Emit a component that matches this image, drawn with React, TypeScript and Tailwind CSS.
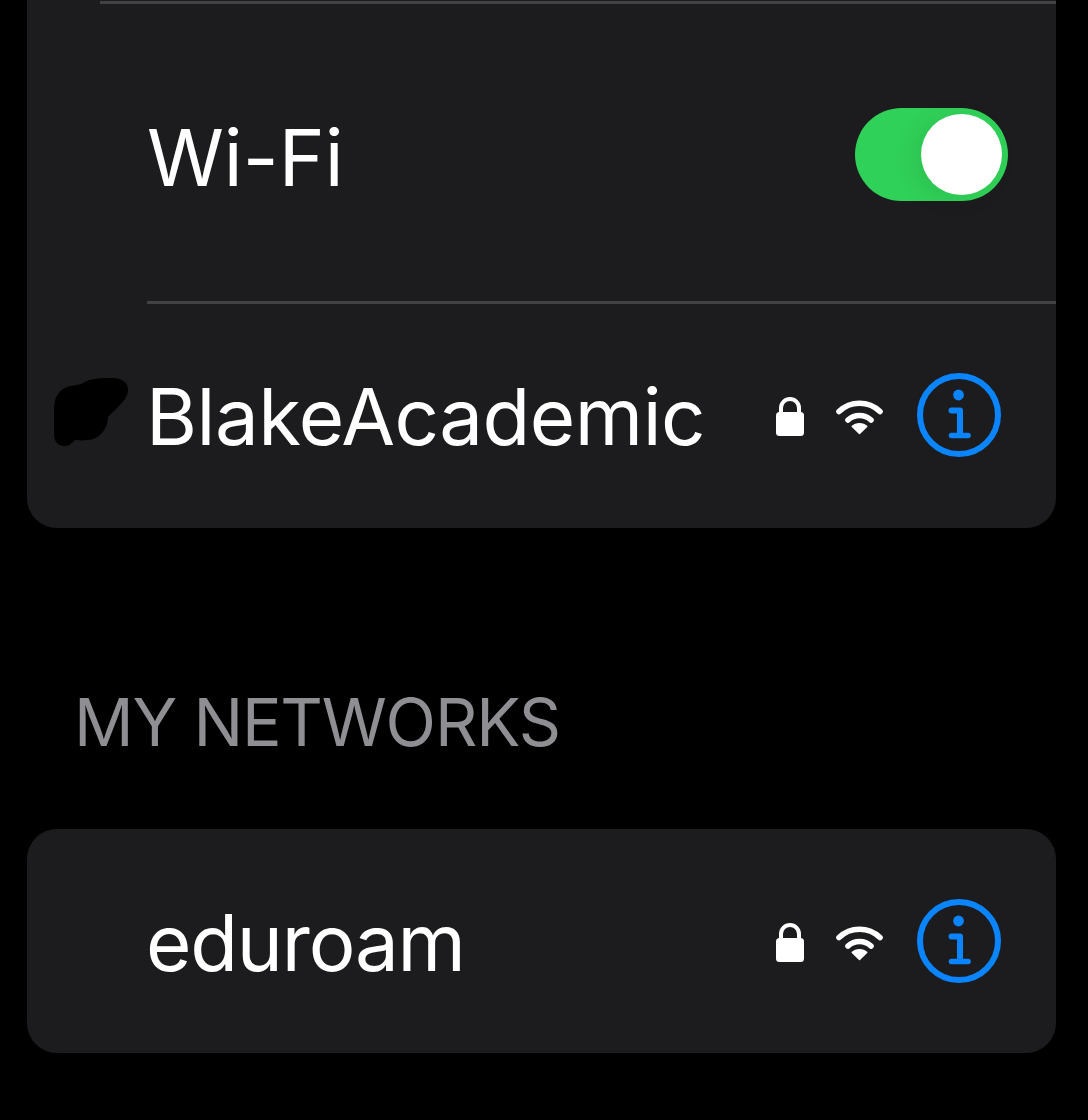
function Lock() {
  return (
    <svg width="30" height="44" viewBox="0 0 30 44" className="block">
      <path d="M6 22 V15 a9 9 0 0 1 18 0 V22" fill="none" stroke="#fff" strokeWidth="4" />
      <rect x="1" y="19" width="28" height="24" rx="3.5" fill="#fff" />
    </svg>
  );
}

function Wifi() {
  return (
    <svg width="48" height="40" viewBox="0 0 48 40" className="block">
      <g transform="translate(-0.5 4)">
        <path d="M3.5 12.5 C15 1.5 33 1.5 44.5 12.5" fill="none" stroke="#fff" strokeWidth="5.6" strokeLinecap="round" />
        <path d="M12.5 21 C19 15 29 15 35.5 21" fill="none" stroke="#fff" strokeWidth="5.6" strokeLinecap="round" />
        <path d="M24 34.5 L16.8 27.4 C20.5 23.8 27.5 23.8 31.2 27.4 Z" fill="#fff" stroke="#fff" strokeWidth="1.5" strokeLinejoin="round" />
      </g>
    </svg>
  );
}

function Info() {
  return (
    <svg width="84" height="84" viewBox="0 0 84 84" className="block">
      <circle cx="42" cy="42" r="39" fill="none" stroke="#0a84ff" strokeWidth="6" />
      <circle cx="41.5" cy="22" r="5.4" fill="#0a84ff" />
      <path d="M34.5 37.5 H43 V62" fill="none" stroke="#0a84ff" strokeWidth="6" strokeLinecap="round" strokeLinejoin="round" />
      <path d="M34.5 62.5 H51 " fill="none" stroke="#0a84ff" strokeWidth="5.6" strokeLinecap="round" />
    </svg>
  );
}

function Accessories() {
  return (
    <div className="flex items-center">
      <Lock />
      <div className="ml-[31px] mr-[33px]">
        <Wifi />
      </div>
      <Info />
    </div>
  );
}

export default function App() {
  return (
    <div
      className="h-[1120px] w-full overflow-hidden bg-black text-white"
      style={{ fontFamily: "Inter, 'Liberation Sans', sans-serif" }}
    >
      <section className="ml-[27px] mr-[32px] h-[528px] rounded-b-[30px] bg-[#1c1c1e] pt-[1px]">
        <div className="ml-[73px] h-[3px] bg-[#424244]" />
        <div className="flex h-[297px] items-center justify-between pl-[120px] pr-[48px] pt-[4px]">
          <span className="mt-[6px] text-[78px] leading-none tracking-[0px]">Wi-Fi</span>
          <div className="relative h-[93px] w-[153px] rounded-full bg-[#30d158]">
            <div className="absolute right-[6px] top-[6px] h-[81px] w-[81px] rounded-full bg-white shadow-[-8px_4px_24px_rgba(0,0,0,0.08)]" />
          </div>
        </div>
        <div className="ml-[120px] h-[3px] bg-[#424244]" />
        <div className="relative flex h-[224px] items-start justify-between pl-[119px] pr-[55px] pt-[69px]">
          <svg width="76" height="70" viewBox="0 0 76 70" className="absolute left-[26px] top-[73px]">
            <path
              d="M30 6 C38 1 50 1 60 1 C70 1 76 7 75 14 C74 24 62 32 55 40 C55 52 46 63 34 63 C28 64 24 63 22 63 C18 68 14 69 11 69 C5 69 1 64 1 58 L1 33 C1 20 6 11 18 9 C22 8 26 8 30 6 Z"
              fill="#000"
            />
          </svg>
          <span className="-mt-[1px] text-[78px] leading-[90px] tracking-[-0.5px]">BlakeAcademic</span>
          <Accessories />
        </div>
      </section>

      <h2 className="ml-[74px] mt-[154px] text-[66px] uppercase leading-[80px] tracking-[-1.2px] text-[#8e8e93]">
        My Networks
      </h2>

      <section className="ml-[27px] mr-[32px] mt-[67px] flex h-[224px] items-center justify-between rounded-[30px] bg-[#1c1c1e] pl-[119px] pr-[55px]">
        <span className="mt-[4px] text-[78px] leading-[90px] tracking-[-1.2px]">eduroam</span>
        <Accessories />
      </section>
    </div>
  );
}
